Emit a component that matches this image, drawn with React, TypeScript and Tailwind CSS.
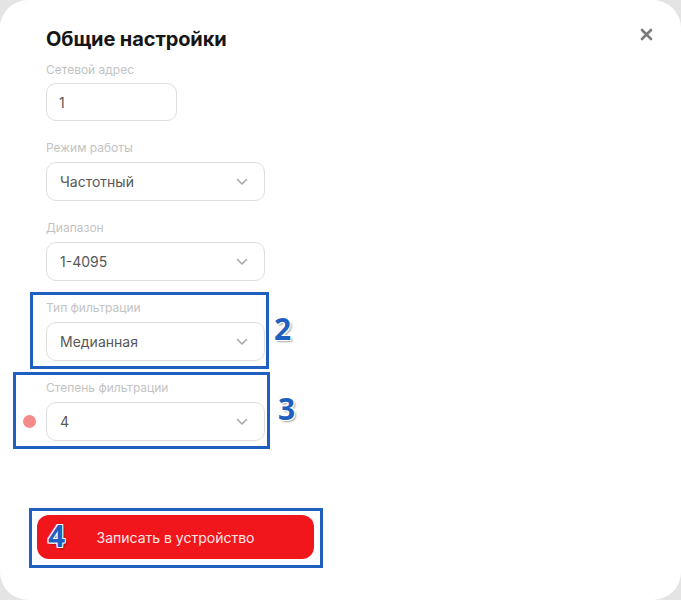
import { ReactNode } from "react";

function Chevron() {
  return (
    <svg width="12" height="8" viewBox="0 0 12 8" fill="none" className="shrink-0">
      <path d="M1.5 1.5 6 6l4.5-4.5" stroke="#a8a8a8" strokeWidth="1.6" strokeLinecap="round" strokeLinejoin="round" />
    </svg>
  );
}

function Field({ label, children, first }: { label: string; children: ReactNode; first?: boolean }) {
  return (
    <div className={first ? "" : "mt-[19px]"}>
      <div className="h-4 text-[12px] leading-4 text-[#c3c3c3]">{label}</div>
      <div className={first ? "mt-[5px]" : "mt-[6px]"}>{children}</div>
    </div>
  );
}

function Select({ value }: { value: string }) {
  return (
    <div className="flex h-[39px] w-[219px] items-center justify-between rounded-[10px] border border-[#dedede] bg-white pl-[13px] pr-[16px] text-[14px] text-[#575757]">
      <span>{value}</span>
      <Chevron />
    </div>
  );
}

const mark = "absolute font-bold text-[#1f5fc0] [font-family:'Open_Sans',sans-serif] [text-shadow:1px_1px_0_#fff,-1px_-1px_0_#fff,1px_-1px_0_#fff,-1px_1px_0_#fff,2px_2px_2px_rgba(0,0,0,0.35)]";

export default function App() {
  return (
    <div className="h-[600px] w-[681px] bg-[#e4e4e4] [font-family:Inter,'Liberation_Sans',sans-serif]">
      <div className="relative flex h-full w-full flex-col overflow-hidden rounded-[28px] bg-white pl-[37px] pt-[27px]">
        <div className="pl-[9px]">
          <h1 className="text-[20px] font-bold leading-6 tracking-[-0.1px] text-[#161616]">Общие настройки</h1>

          <div className="mt-[11px]">
            <Field label="Сетевой адрес" first>
              <div className="flex h-[38px] w-[131px] items-center rounded-[10px] border border-[#dedede] pl-[12px] text-[14px] text-[#575757]">1</div>
            </Field>
            <Field label="Режим работы">
              <Select value="Частотный" />
            </Field>
            <Field label="Диапазон">
              <Select value="1-4095" />
            </Field>
            <Field label="Тип фильтрации">
              <Select value="Медианная" />
            </Field>
            <Field label="Степень фильтрации">
              <div className="-ml-[23px] flex items-center gap-[10px]">
                <span className="h-[13px] w-[13px] shrink-0 rounded-full bg-[#f58a8a]" />
                <Select value="4" />
              </div>
            </Field>
          </div>
        </div>

        <button className="mt-[74px] flex h-[44px] w-[277px] items-center justify-center rounded-[12px] bg-[#f1161b] text-[14px] text-[#ffe6e6]">
          Записать в устройство
        </button>

        <button className="absolute right-[28px] top-[28px] text-[#7b7b7b]" aria-label="Закрыть">
          <svg width="13" height="13" viewBox="0 0 13 13">
            <path d="M2 2l9 9M11 2l-9 9" stroke="currentColor" strokeWidth="2.6" strokeLinecap="round" />
          </svg>
        </button>

        <div className="pointer-events-none absolute left-[30px] top-[292px] h-[77px] w-[239px] border-[3px] border-[#1f5fc0]" />
        <div className="pointer-events-none absolute left-[13px] top-[372px] h-[77px] w-[257px] border-[3px] border-[#1f5fc0]" />
        <div className="pointer-events-none absolute left-[29px] top-[508px] h-[60px] w-[294px] border-[3px] border-[#1f5fc0]" />

        <span className={`${mark} left-[274px] top-[309px] text-[30px] leading-10`}>2</span>
        <span className={`${mark} left-[278px] top-[389px] text-[30px] leading-10`}>3</span>
        <span className={`${mark} left-[48px] top-[516px] text-[30px] leading-10`}>4</span>
      </div>
    </div>
  );
}
